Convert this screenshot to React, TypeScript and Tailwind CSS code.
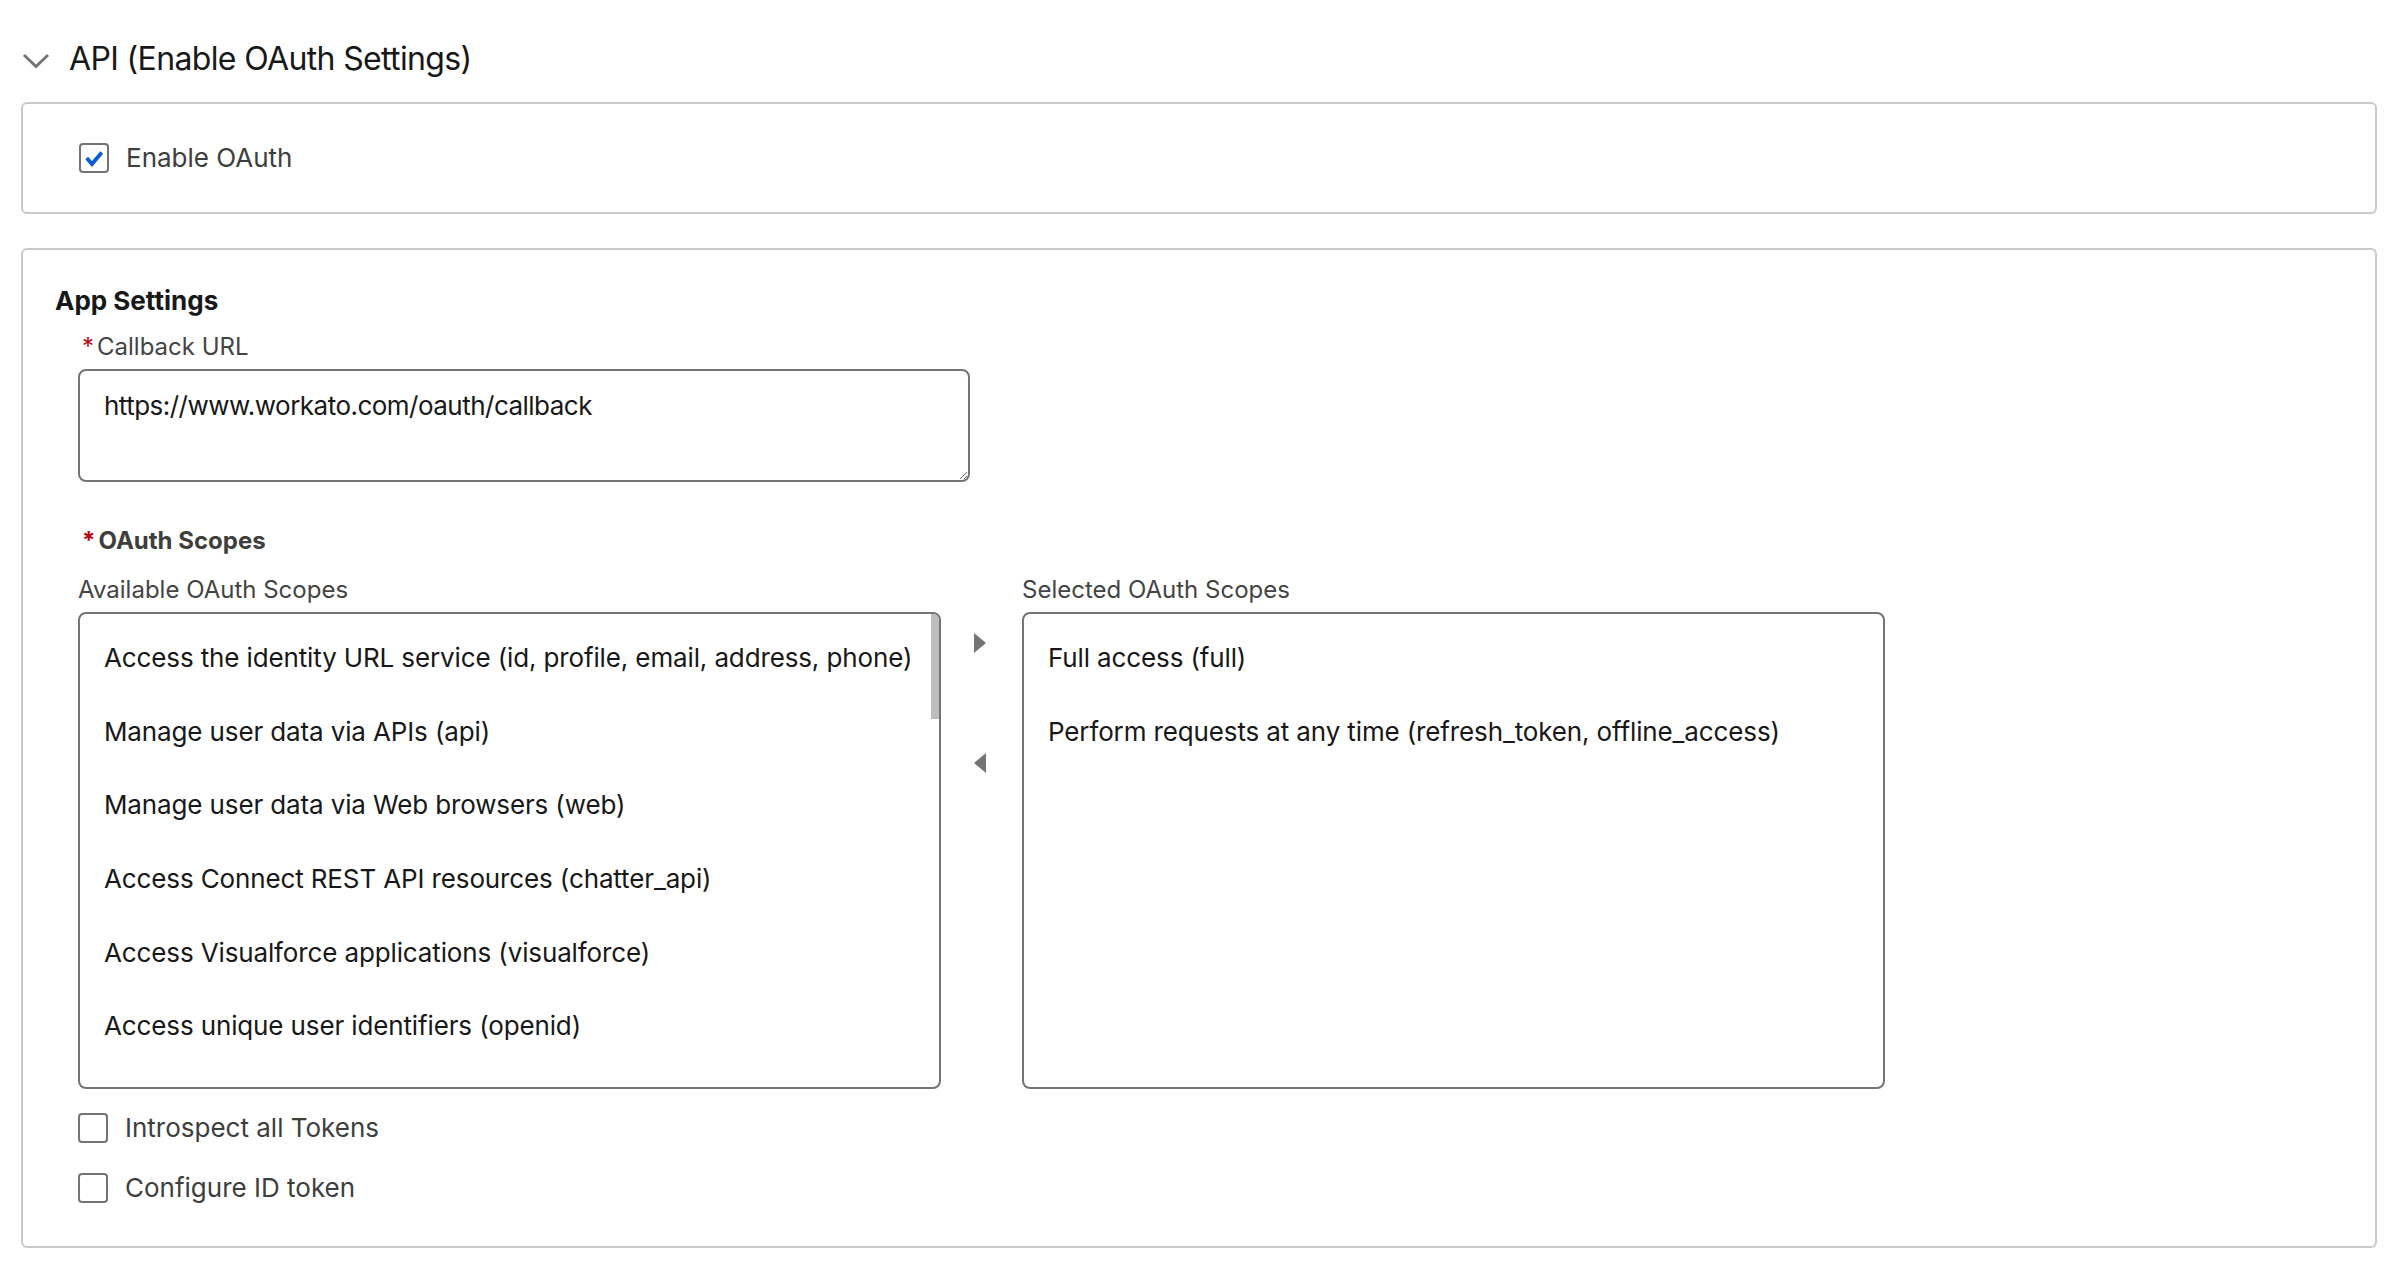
import React from 'react';

const AVAILABLE_SCOPES = [
    'Access the identity URL service (id, profile, email, address, phone)',
    'Manage user data via APIs (api)',
    'Manage user data via Web browsers (web)',
    'Access Connect REST API resources (chatter_api)',
    'Access Visualforce applications (visualforce)',
    'Access unique user identifiers (openid)',
];

const SELECTED_SCOPES = [
    'Full access (full)',
    'Perform requests at any time (refresh_token, offline_access)',
];

const Checkbox: React.FC<{ checked?: boolean }> = ({ checked }) => (
    <span className="flex-shrink-0 w-[30px] h-[30px] rounded-[4px] border-2 border-[#747474] bg-white flex items-center justify-center">
        {checked && (
            <svg width="30" height="30" viewBox="0 0 30 30" className="-m-[2px]">
                <polyline points="9,16.5 13,21 21.5,11" fill="none" stroke="#0b5cd5" strokeWidth="3.8" strokeLinecap="square" strokeLinejoin="miter" />
            </svg>
        )}
    </span>
);

const CheckRow: React.FC<{ label: string; checked?: boolean }> = ({ label, checked }) => (
    <label className="flex items-center gap-[17px] h-[40px]">
        <Checkbox checked={checked} />
        <span className="text-[26px] leading-[40px] text-[#3e3e3c]">{label}</span>
    </label>
);

const Required = () => <abbr className="no-underline text-[#ba0517] mr-[3px] ml-[4px]" title="required">*</abbr>;

const ScopeList: React.FC<{ items: string[]; scroll?: boolean }> = ({ items, scroll }) => (
    <div className="relative w-[863px] h-[477px] border-2 border-[#747474] rounded-[8px] bg-white overflow-hidden">
        <ul className="pt-[7px]">
            {items.map(item => (
                <li key={item} className="pl-[24px] h-[73.7px] leading-[73.7px] text-[26px] tracking-[-0.005em] text-[#181818] whitespace-nowrap">
                    {item}
                </li>
            ))}
        </ul>
        {/* scrollbar thumb */}
        {scroll && <div className="absolute right-0 top-0 w-[8px] h-[105px] bg-[#bdbdbd]"></div>}
    </div>
);

export default function App() {
    return (
        <div className="min-h-screen bg-white px-[21px] pt-[39px] font-['Inter',sans-serif]">
            {/* section header */}
            <div className="flex items-center h-[40px]">
                <svg width="28" height="18" viewBox="0 0 28 18" className="ml-[1px] mr-[19px] mt-[3px]">
                    <polyline points="2,3 14,14.5 26,3" fill="none" stroke="#747474" strokeWidth="3" />
                </svg>
                <h2 className="text-[32px] leading-[40px] text-[#181818] tracking-[-0.02em]">API (Enable OAuth Settings)</h2>
            </div>

            {/* enable oauth */}
            <div className="mt-[23px] h-[112px] border-2 border-[#c9c9c9] rounded-[6px] flex items-center pl-[56px]">
                <CheckRow label="Enable OAuth" checked />
            </div>

            {/* app settings */}
            <div className="mt-[34px] h-[1000px] border-2 border-[#c9c9c9] rounded-[6px] pl-[32px] pt-[35px]">
                <h3 className="text-[26px] leading-[32px] font-bold text-[#181818]">App Settings</h3>

                <div className="pl-[23px]">
                    <div className="mt-[15px] text-[24px] leading-[30px] text-[#444444]">
                        <Required />Callback URL
                    </div>
                    <textarea
                        readOnly
                        defaultValue="https://www.workato.com/oauth/callback"
                        className="mt-[7px] block w-[892px] h-[113px] border-2 border-[#747474] rounded-[8px] pl-[24px] pr-[16px] pt-[15px] text-[26px] leading-[39px] tracking-[-0.02em] text-[#181818] resize-y outline-none font-['Inter',sans-serif]"
                    />

                    <div className="mt-[44px] text-[24px] leading-[30px] font-bold text-[#3e3e3c]">
                        <Required />OAuth Scopes
                    </div>

                    <div className="mt-[19px] flex">
                        <div>
                            <div className="text-[24px] leading-[30px] text-[#444444]">Available OAuth Scopes</div>
                            <div className="mt-[7px]">
                                <ScopeList items={AVAILABLE_SCOPES} scroll />
                            </div>
                        </div>
                        <div className="w-[81px] pt-[37px] flex flex-col items-center">
                            <svg width="14" height="22" viewBox="0 0 14 22" className="mt-[20px] ml-[-4px]">
                                <polygon points="1,1 13,11 1,21" fill="#747474" />
                            </svg>
                            <svg width="14" height="22" viewBox="0 0 14 22" className="mt-[98px] ml-[-4px]">
                                <polygon points="13,1 1,11 13,21" fill="#747474" />
                            </svg>
                        </div>
                        <div>
                            <div className="text-[24px] leading-[30px] text-[#444444]">Selected OAuth Scopes</div>
                            <div className="mt-[7px]">
                                <ScopeList items={SELECTED_SCOPES} />
                            </div>
                        </div>
                    </div>

                    <div className="mt-[19px] flex flex-col gap-[20px]">
                        <CheckRow label="Introspect all Tokens" />
                        <CheckRow label="Configure ID token" />
                    </div>
                </div>
            </div>
        </div>
    );
}
